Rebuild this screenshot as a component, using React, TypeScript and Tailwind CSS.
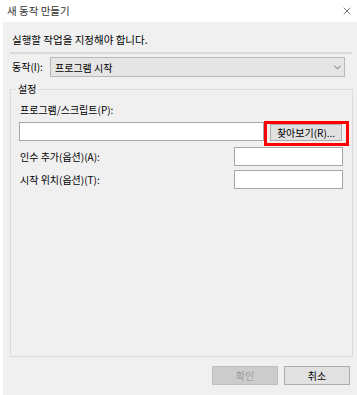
import { ChevronDown, X } from "lucide-react";

const font = "font-['Segoe_UI','Noto_Sans_CJK_KR',sans-serif]";

function TextBox({ className = "" }: { className?: string }) {
	return <div className={`h-[19px] border border-[#a6a6a6] bg-white ${className}`} />;
}

export default function App() {
	return (
		<div className={`flex h-[395px] w-[357px] flex-col bg-white text-[10px] text-black ${font}`}>
			{/* Title bar */}
			<div className="flex h-[22px] items-center justify-between pl-[7px] pr-[4px]">
				<span className="text-[10.5px] text-[#333]">새 동작 만들기</span>
				<X className="h-[12px] w-[12px] text-[#333]" strokeWidth={1.3} />
			</div>

			{/* Body */}
			<div className="ml-[3px] flex flex-1 flex-col bg-[#f0f0f0]">
				<p className="pl-[9px] pt-[10px] leading-[16px] text-[10.5px]">실행할 작업을 지정해야 합니다.</p>
				<div className="ml-[7px] mt-[4px] h-[2px] w-[342px] bg-[#d9d9d9]" />

				<div className="mt-[3px] flex items-center">
					<span className="w-[47px] pl-[9px] leading-[16px]">동작(I):</span>
					<div className="flex h-[20px] w-[295px] items-center justify-between border border-[#b9b9b9] bg-[#e5e5e5] pl-[4px] pr-[1px]">
						<span>프로그램 시작</span>
						<ChevronDown className="h-[11px] w-[11px] text-[#3c3c3c]" strokeWidth={1.6} />
					</div>
				</div>

				<fieldset className="ml-[7px] mt-[4px] flex w-[343px] flex-1 flex-col border border-[#dcdcdc]">
					<legend className="ml-[5px] px-[2px] leading-[16px]">설정</legend>
					<span className="mt-[5px] pl-[9px] leading-[16px]">프로그램/스크립트(P):</span>
					<div className="mt-[3px] flex items-start">
						<TextBox className="ml-[8px] mt-[1px] w-[245px]" />
						<div className="h-[25px] w-[85px] border-[3px] border-[#ff0000] pl-[3px] pt-[0px]">
							<button className="flex h-[17px] w-[72px] items-center justify-center border border-[#adadad] bg-[#e1e1e1] text-[10px]">
								찾아보기(R)...
							</button>
						</div>
					</div>
					<div className="mt-[1px] flex items-center justify-between pr-[9px]">
						<span className="pl-[9px] leading-[16px]">인수 추가(옵션)(A):</span>
						<TextBox className="w-[109px]" />
					</div>
					<div className="mt-[4px] flex items-center justify-between pr-[9px]">
						<span className="pl-[9px] leading-[16px]">시작 위치(옵션)(T):</span>
						<TextBox className="w-[109px]" />
					</div>
				</fieldset>

				<div className="mb-[10px] mt-[9px] flex justify-end gap-[6px] pr-[7px]">
					<button className="h-[19px] w-[66px] border border-[#bfbfbf] bg-[#cccccc] text-[10px] text-[#9d9d9d]">
						확인
					</button>
					<button className="h-[19px] w-[66px] border border-[#adadad] bg-[#e1e1e1] text-[10px]">
						취소
					</button>
				</div>
			</div>
		</div>
	);
}
